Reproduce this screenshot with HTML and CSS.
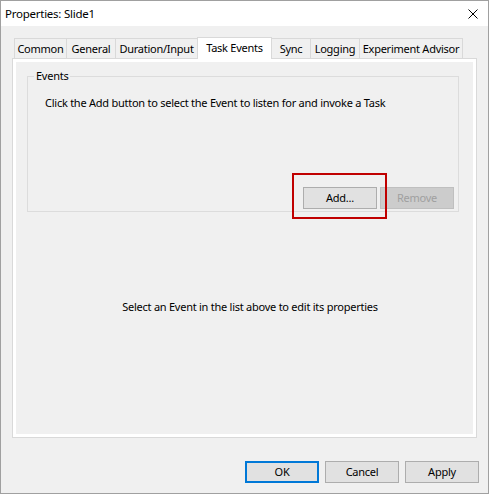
FILE: index.html
```html
<!DOCTYPE html>
<html>
<head>
<meta charset="utf-8">
<title>Properties: Slide1</title>
<link rel="stylesheet" href="styles.css">
</head>
<body>
<div class="window">
  <div class="titlebar">
    <span class="title">Properties: Slide1</span>
    <svg class="close" width="10" height="10" viewBox="0 0 10 10"><path d="M0.5 0.5L9.5 9.5M9.5 0.5L0.5 9.5" stroke="#000" stroke-width="1" fill="none"/></svg>
  </div>
  <div class="content">
    <div class="tabs">
      <div class="tab t-common">Common</div>
      <div class="tab t-general">General</div>
      <div class="tab t-duration">Duration/Input</div>
      <div class="tab t-task selected">Task Events</div>
      <div class="tab t-sync">Sync</div>
      <div class="tab t-logging">Logging</div>
      <div class="tab t-advisor">Experiment Advisor</div>
    </div>
    <div class="panel">
      <div class="page">
        <fieldset class="group">
          <legend>Events</legend>
          <div class="group-body">
            <div class="hint">Click the Add button to select the Event to listen for and invoke a Task</div>
            <div class="group-buttons">
              <button class="btn">Add...</button>
              <button class="btn" disabled>Remove</button>
            </div>
          </div>
        </fieldset>
        <div class="message">Select an Event in the list above to edit its properties</div>
      </div>
    </div>
  </div>
  <div class="footer">
    <button class="btn default">OK</button>
    <button class="btn">Cancel</button>
    <button class="btn">Apply</button>
  </div>
  <div class="highlight"></div>
</div>
</body>
</html>
```

FILE: styles.css
```css
* { box-sizing: border-box; }
html, body { margin: 0; padding: 0; background: #ffffff; }
body {
  font-family: "Noto Sans", "DejaVu Sans", sans-serif;
  font-size: 11px;
  letter-spacing: -0.25px;
  color: #000;
}
.window {
  position: relative;
  width: 489px;
  height: 494px;
  border: 1px solid #a0a0a0;
  background: #f0f0f0;
  display: flex;
  flex-direction: column;
}
.titlebar {
  height: 25px;
  background: #ffffff;
  display: flex;
  align-items: center;
  justify-content: space-between;
  padding: 0 10px 0 4px;
  flex: none;
}
.title { line-height: 16px; font-size: 11.5px; }
.close { display: block; }
.content {
  padding: 11px 11px 0 11px;
}
.tabs {
  display: flex;
  align-items: flex-end;
  height: 21px;
  padding-left: 2px;
}
.tab {
  height: 20px;
  border: 1px solid #d9d9d9;
  border-bottom: none;
  margin-left: -1px;
  background: #f0f0f0;
  display: flex;
  align-items: center;
  justify-content: center;
  line-height: 16px;
  white-space: nowrap;
}
.tab:first-child { margin-left: 0; }
.tab.selected {
  height: 22px;
  margin-bottom: -1px;
  background: #ffffff;
  position: relative;
  z-index: 1;
  padding-bottom: 2px;
}
.t-common { width: 53px; }
.t-general { width: 50px; }
.t-duration { width: 83px; }
.t-task { width: 75px; }
.t-sync { width: 40px; }
.t-logging { width: 50px; }
.t-advisor { width: 104px; }
.panel {
  width: 465px;
  height: 380px;
  border: 1px solid #d9d9d9;
  background: #ffffff;
  padding: 3px;
}
.page {
  height: 100%;
  background: #f0f0f0;
  padding-top: 6px;
}
.group {
  margin: 0 0 0 11px;
  width: 432px;
  padding: 0;
  border: 1px solid #dcdcdc;
}
.group legend {
  margin-left: 6px;
  padding: 0 2px;
  line-height: 16px;
}
.group-body {
  height: 127px;
  padding: 11px 4px 2px 17px;
  display: flex;
  flex-direction: column;
}
.hint { line-height: 16px; }
.group-buttons {
  margin-top: auto;
  display: flex;
  justify-content: flex-end;
  gap: 3px;
}
.btn {
  font-family: inherit;
  font-size: 11px;
  letter-spacing: -0.25px;
  width: 74px;
  height: 22px;
  padding: 0;
  margin: 0;
  border: 1px solid #adadad;
  background: #e1e1e1;
  color: #000;
  line-height: 16px;
}
.btn:disabled {
  background: #cccccc;
  border-color: #bfbfbf;
  color: #a0a0a0;
}
.btn.default {
  border: 2px solid #0078d7;
}
.message {
  margin-top: 87px;
  text-align: center;
  line-height: 16px;
  padding-left: 11px;
}
.footer {
  margin-top: 23px;
  display: flex;
  justify-content: flex-end;
  gap: 6px;
  padding-right: 9px;
}
.highlight {
  position: absolute;
  left: 291px;
  top: 172px;
  width: 95px;
  height: 46px;
  border: 2px solid #c00000;
}
```
